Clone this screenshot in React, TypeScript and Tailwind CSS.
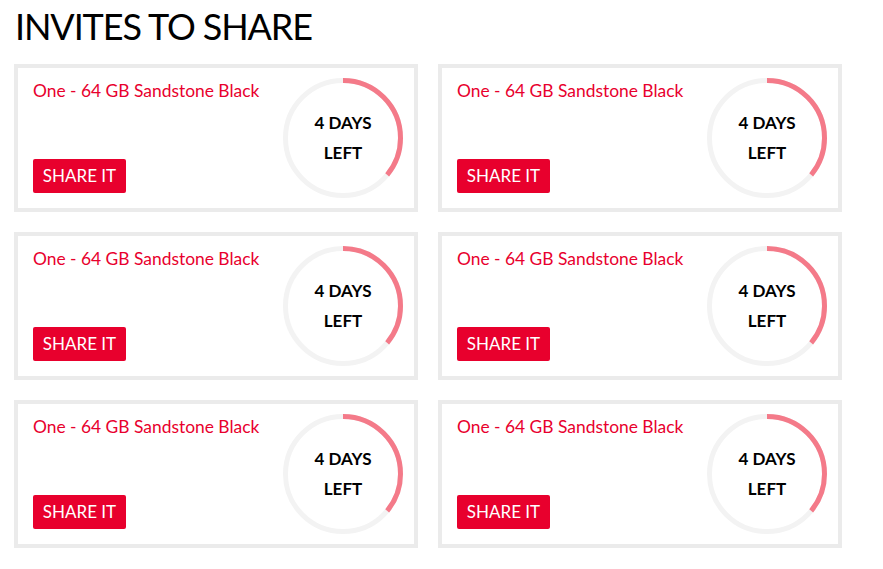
import React from "react";

type InviteProps = {
  name: string;
  days: number;
  progress: number;
};

const R = 57.5;
const C = 2 * Math.PI * R;

const Countdown: React.FC<{ days: number; progress: number }> = ({
  days,
  progress,
}) => {
  return (
    <div className="relative w-[120px] h-[120px]">
      <svg width="120" height="120" viewBox="0 0 120 120" className="-rotate-90">
        <circle cx="60" cy="60" r={R} fill="none" stroke="#f3f3f3" strokeWidth="5" />
        <circle
          cx="60"
          cy="60"
          r={R}
          fill="none"
          stroke="#f47a89"
          strokeWidth="5"
          strokeDasharray={`${C * progress} ${C}`}
        />
      </svg>
      <div className="absolute inset-0 flex flex-col items-center justify-center text-[17px] font-bold leading-[30px] text-black">
        <span>{days} DAYS</span>
        <span>LEFT</span>
      </div>
    </div>
  );
};

const InviteCard: React.FC<InviteProps> = ({ name, days, progress }) => {
  return (
    <div className="h-[148px] border-4 border-[#ebebeb] flex justify-between pl-[15px] pr-[11px]">
      <div className="flex flex-col justify-between pt-[13px] pb-[15px]">
        <div className="text-[17.4px] leading-[20px] text-[#e8002d]">{name}</div>
        <button className="self-start h-[34px] w-[93px] bg-[#e8002d] text-white text-[17px] rounded-[2px]">
          SHARE IT
        </button>
      </div>
      <div className="flex items-center">
        <Countdown days={days} progress={progress} />
      </div>
    </div>
  );
};

export default function App() {
  const invites = Array.from({ length: 6 }, () => ({
    name: "One - 64 GB Sandstone Black",
    days: 4,
    progress: 0.36,
  }));

  return (
    <div className="min-h-screen bg-white pl-[14px] font-['Lato','Liberation_Sans',sans-serif]">
      <h1 className="text-[36px] tracking-[-1.1px] leading-[44px] pt-[4px] text-black pl-[1px]">
        INVITES TO SHARE
      </h1>
      <div className="grid grid-cols-[404px_404px] gap-[20px] mt-[16px]">
        {invites.map((inv, i) => (
          <InviteCard key={i} {...inv} />
        ))}
      </div>
    </div>
  );
}
